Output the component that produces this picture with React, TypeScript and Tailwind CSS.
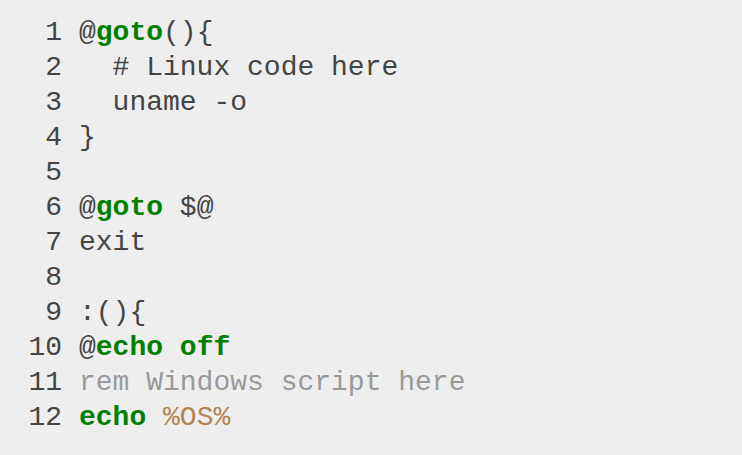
import React from 'react'

type Seg = { t: string; c?: 'kw' | 'cm' | 'var' }

const lines: Seg[][] = [
  [{ t: '@' }, { t: 'goto', c: 'kw' }, { t: '(){' }],
  [{ t: '  # Linux code here' }],
  [{ t: '  uname -o' }],
  [{ t: '}' }],
  [],
  [{ t: '@' }, { t: 'goto', c: 'kw' }, { t: ' $@' }],
  [{ t: 'exit' }],
  [],
  [{ t: ':(){' }],
  [{ t: '@' }, { t: 'echo off', c: 'kw' }],
  [{ t: 'rem Windows script here', c: 'cm' }],
  [{ t: 'echo', c: 'kw' }, { t: ' ' }, { t: '%OS%', c: 'var' }],
]

function cls(c?: Seg['c']) {
  if (c === 'kw') return 'font-bold text-[#008000]'
  if (c === 'cm') return 'text-[#999999]'
  if (c === 'var') return 'text-[#b5834f]'
  return ''
}

export default function App() {
  return (
    <div className="w-[742px] h-[455px] bg-[#eeeeee] overflow-hidden">
      <pre className="pt-[15px] pl-[28px] text-[28px] leading-[35px] text-[#444444] font-['Liberation_Mono','Courier_New',monospace]">
        {lines.map((segs, i) => (
          <div key={i} className="flex whitespace-pre">
            <span className="w-[34px] text-right">{i + 1}</span>
            <span className="ml-[17px]">
              {segs.map((s, j) => (
                <span key={j} className={cls(s.c)}>
                  {s.t}
                </span>
              ))}
            </span>
          </div>
        ))}
      </pre>
    </div>
  )
}
